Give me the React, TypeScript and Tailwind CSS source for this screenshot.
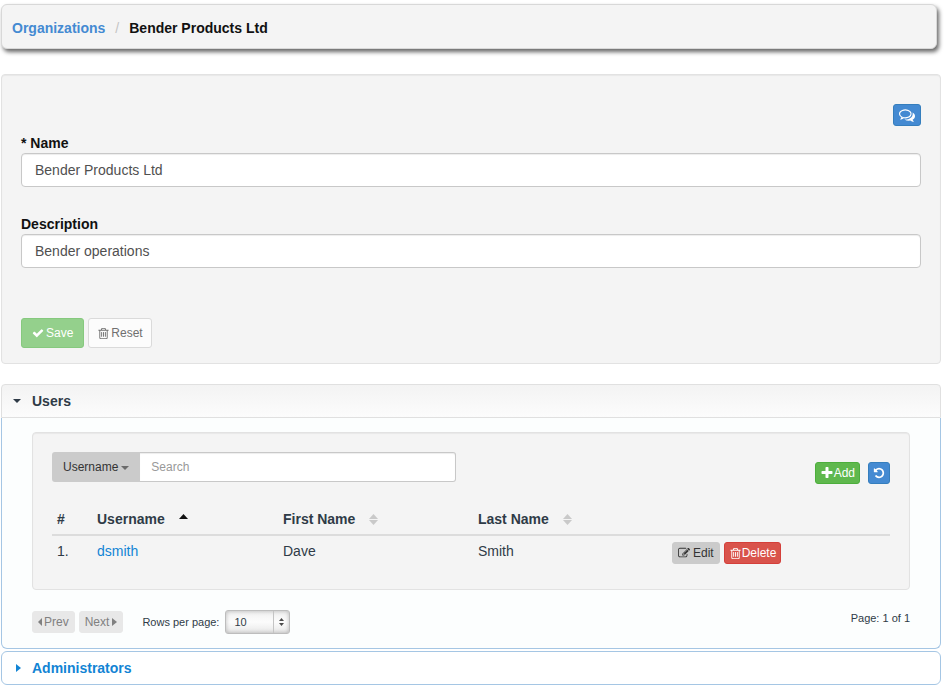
import { useState } from "react";
import type { ReactNode } from "react";

const ICONS = {
  check:
    "M1671 566q0 40-28 68l-724 724-136 136q-28 28-68 28t-68-28l-136-136-362-362q-28-28-28-68t28-68l136-136q28-28 68-28t68 28l294 295 656-657q28-28 68-28t68 28l136 136q28 28 28 68z",
  trash:
    "M704 736v576q0 14-9 23t-23 9h-64q-14 0-23-9t-9-23v-576q0-14 9-23t23-9h64q14 0 23 9t9 23zm256 0v576q0 14-9 23t-23 9h-64q-14 0-23-9t-9-23v-576q0-14 9-23t23-9h64q14 0 23 9t9 23zm256 0v576q0 14-9 23t-23 9h-64q-14 0-23-9t-9-23v-576q0-14 9-23t23-9h64q14 0 23 9t9 23zm128 724v-948h-896v948q0 22 7 40.500t14.500 27 10.500 8.500h832q3 0 10.500-8.500t14.500-27 7-40.500zm-672-1076h448l-48-117q-7-9-17-11h-317q-10 2-17 11zm928 32v64q0 14-9 23t-23 9h-96v948q0 83-47 143.500t-113 60.500h-832q-66 0-113-58.500t-47-141.500v-952h-96q-14 0-23-9t-9-23v-64q0-14 9-23t23-9h309l70-167q15-37 54-63t79-26h320q40 0 79 26t54 63l70 167h309q14 0 23 9t9 23z",
  plus: "M1600 736v192q0 40-28 68t-68 28h-416v416q0 40-28 68t-68 28h-192q-40 0-68-28t-28-68v-416h-416q-40 0-68-28t-28-68v-192q0-40 28-68t68-28h416v-416q0-40 28-68t68-28h192q40 0 68 28t28 68v416h416q40 0 68 28t28 68z",
  edit: "M888 1184l116-116-152-152-116 116v56h96v96h56zm440-720q-16-16-33 1l-350 350q-17 17-1 33t33-1l350-350q17-17 1-33zm80 594v190q0 119-84.500 203.500t-203.500 84.500h-832q-119 0-203.500-84.500t-84.500-203.500v-832q0-119 84.500-203.500t203.500-84.500h832q63 0 117 25 15 7 18 23 3 17-9 29l-49 49q-14 14-32 8-23-6-45-6h-832q-66 0-113 47t-47 113v832q0 66 47 113t113 47h832q66 0 113-47t47-113v-126q0-13 9-22l64-64q15-15 35-7t20 29zm-96-738l288 288-672 672h-288v-288zm444 132l-92 92-288-288 92-92q28-28 68-28t68 28l152 152q28 28 28 68t-28 68z",
  undo: "M1664 896q0 156-61 298t-164 245-245 164-298 61q-172 0-327-72.500t-264-204.500q-7-10-6.500-22.500t8.500-20.500l137-138q10-9 25-9 16 2 23 12 73 95 179 147t225 52q104 0 198.500-40.500t163.500-109.500 109.500-163.500 40.500-198.500-40.500-198.500-109.500-163.500-163.500-109.500-198.500-40.500q-98 0-188 35.500t-160 101.500l137 138q31 30 14 69-17 40-59 40h-448q-26 0-45-19t-19-45v-448q0-42 40-59 39-17 69 14l130 129q107-101 244.500-156.500t284.500-55.500q156 0 298 61t245 164 164 245 61 298z",
  comments:
    "M704 384q-153 0-286 52t-211.500 141-78.500 191q0 82 53 158t149 132l97 56-35 84q34-20 62-39l44-31 53 10q78 14 153 14 153 0 286-52t211.500-141 78.500-191-78.500-191-211.500-141-286-52zm0-128q191 0 353.500 68.500t256.500 186.500 94 257-94 257-256.500 186.500-353.500 68.500q-86 0-176-16-124 88-278 128-36 9-86 16h-3q-11 0-20.500-8t-11.500-21q-1-3-1-6.500t.5-6.500 2-6l2.500-5 3.500-5.500 4-5 4.500-5 4-4.500q5-6 23-25t26-29.500 22.500-29 25-38.500 20.500-44q-124-72-195-177t-71-224q0-139 94-257t256.500-186.500 353.500-68.500zm822 1169q10 24 20.500 44t25 38.500 22.500 29 26 29.500 23 25q1 1 4 4.500t4.500 5 4 5 3.500 5.500l2.500 5 2 6 .5 6.500-1 6.500q-3 14-13 22t-22 7q-50-7-86-16-154-40-278-128-90 16-176 16-271 0-472-132 58 4 88 4 161 0 309-45t264-129q125-92 192-212t67-254q0-77-23-152 129 71 204 178t75 230q0 120-71 224.500t-195 176.500z",
};

function Icon({ name, className = "size-3" }: { name: keyof typeof ICONS; className?: string }) {
  return (
    <svg viewBox="0 0 1792 1792" fill="currentColor" aria-hidden="true" className={`shrink-0 ${className}`}>
      <path d={ICONS[name]} />
    </svg>
  );
}

const TRIANGLES = {
  down: { box: "0 0 8 4", d: "M0 0h8L4 4z" },
  up: { box: "0 0 8 4", d: "M0 4h8L4 0z" },
  left: { box: "0 0 4 8", d: "M4 0v8L0 4z" },
  right: { box: "0 0 4 8", d: "M0 0v8L4 4z" },
};

function Triangle({ to, className }: { to: keyof typeof TRIANGLES; className: string }) {
  return (
    <svg
      viewBox={TRIANGLES[to].box}
      preserveAspectRatio="none"
      fill="currentColor"
      aria-hidden="true"
      className={`shrink-0 ${className}`}
    >
      <path d={TRIANGLES[to].d} />
    </svg>
  );
}

function SortBoth() {
  return (
    <span className="flex flex-col gap-px text-[#c9c9c9]">
      <Triangle to="up" className="h-[5px] w-[9px]" />
      <Triangle to="down" className="h-[5px] w-[9px]" />
    </span>
  );
}

function Field({ id, label, initial }: { id: string; label: string; initial: string }) {
  const [value, setValue] = useState(initial);
  return (
    <div>
      <label htmlFor={id} className="block font-bold text-[#111]">
        {label}
      </label>
      <input
        id={id}
        value={value}
        onChange={(e) => setValue(e.target.value)}
        className="block h-[34px] w-full rounded border border-[#c8c8c8] bg-white px-[13px] text-[#505050] shadow-[inset_0_1px_1px_rgba(0,0,0,0.075)]"
      />
    </div>
  );
}

function HeaderCell({ className, children, sort }: { className: string; children: ReactNode; sort?: ReactNode }) {
  return (
    <th scope="col" className={`border-b-2 border-[#dcdcdc] p-[5px] text-left font-bold ${className}`}>
      <span className="flex items-center gap-[14px]">
        {children}
        {sort}
      </span>
    </th>
  );
}

const PANEL = "rounded border border-[#e2e2e2] bg-[#f4f4f4] px-[19px] shadow-[inset_0_1px_1px_rgba(0,0,0,0.05)]";
const SMALL = "flex h-[22px] items-center rounded-[3px] border px-[5px] text-xs";

export default function App() {
  return (
    <div className="bg-white pt-1 pr-[5px] pb-1 pl-px font-['Liberation_Sans',Arial,sans-serif] text-sm leading-5 text-[#2f3b47]">
      <nav
        aria-label="Breadcrumb"
        className="mr-1 flex h-[45px] items-center rounded-md border border-[#d8d8d8] bg-[#f4f4f4] px-[10px] pt-[3px] font-bold shadow-[2px_3px_4px_rgba(0,0,0,0.6)]"
      >
        <a href="#organizations" className="text-[#448ad2]">
          Organizations
        </a>
        <span className="px-[10px] font-normal text-[#c4c4c4]">/</span>
        <span className="text-[#111]">Bender Products Ltd</span>
      </nav>

      <form className={`mt-[25px] pt-[29px] pb-[15px] ${PANEL}`} onSubmit={(e) => e.preventDefault()}>
        <div className="flex justify-end">
          <button type="button" aria-label="Comments" className={`${SMALL} border-[#357ebd] bg-[#448ad2] text-white`}>
            <Icon name="comments" className="size-4" />
          </button>
        </div>
        <div className="mt-[7px] flex flex-col gap-[27px]">
          <Field id="name" label="* Name" initial="Bender Products Ltd" />
          <Field id="description" label="Description" initial="Bender operations" />
        </div>
        <div className="mt-[50px] flex gap-1 text-xs">
          <button
            type="submit"
            className="flex h-[30px] items-center gap-[2px] rounded-[3px] border border-[#86c97e] bg-[#94d08c] px-[10px] text-white"
          >
            <Icon name="check" />
            Save
          </button>
          <button
            type="button"
            className="flex h-[30px] items-center gap-px rounded-[3px] border border-[#dadada] bg-[#fcfcfc] px-2 text-[#707070]"
          >
            <Icon name="trash" className="size-[13px]" />
            Reset
          </button>
        </div>
      </form>

      <section className="mt-5">
        <h2>
          <button
            type="button"
            aria-expanded="true"
            className="flex h-[34px] w-full items-center gap-[11px] rounded-t border border-[#e0e0e0] bg-linear-to-b from-[#f3f3f3] to-[#fcfcfc] px-[11px] font-bold"
          >
            <Triangle to="down" className="h-1 w-2" />
            Users
          </button>
        </h2>
        <div className="rounded-b-md border border-t-0 border-[#a5c6e4] bg-[#fcfefe] px-[30px] pt-[14px] pb-[14px]">
          <div className={`py-[19px] ${PANEL}`}>
            <div className="flex items-start justify-between">
              <div className="flex h-[30px] w-[404px] text-xs">
                <button
                  type="button"
                  aria-haspopup="menu"
                  className="flex items-center gap-[3px] rounded-l-[3px] bg-[#cbcbcb] px-[11px] text-[#333]"
                >
                  Username
                  <Triangle to="down" className="mt-[2px] h-1 w-2 text-[#6b6b6b]" />
                </button>
                <input
                  aria-label="Search"
                  placeholder="Search"
                  className="min-w-0 flex-1 rounded-r-[3px] border border-l-0 border-[#c8c8c8] bg-white px-[11px] placeholder:text-[#999] shadow-[inset_0_1px_1px_rgba(0,0,0,0.075)]"
                />
              </div>
              <div className="flex gap-2 pt-[10px]">
                <button type="button" className={`${SMALL} border-[#4cae3c] bg-[#5fb84d] px-1! text-white`}>
                  <Icon name="plus" className="size-[14px]" />
                  Add
                </button>
                <button
                  type="button"
                  aria-label="Refresh"
                  className={`${SMALL} w-[22px] justify-center border-[#357ebd] bg-[#448ad2] text-white`}
                >
                  <Icon name="undo" />
                </button>
              </div>
            </div>

            <table className="mt-5 w-full table-fixed border-collapse">
              <thead>
                <tr>
                  <HeaderCell className="w-10">#</HeaderCell>
                  <HeaderCell
                    className="w-[186px]"
                    sort={<Triangle to="up" className="mb-[5px] h-[5px] w-[9px] text-[#111]" />}
                  >
                    Username
                  </HeaderCell>
                  <HeaderCell className="w-[195px]" sort={<SortBoth />}>
                    First Name
                  </HeaderCell>
                  <HeaderCell className="w-[194px]" sort={<SortBoth />}>
                    Last Name
                  </HeaderCell>
                  <th scope="col" aria-label="Actions" className="border-b-2 border-[#dcdcdc]" />
                </tr>
              </thead>
              <tbody>
                <tr className="align-top">
                  <td className="p-[5px]">1.</td>
                  <td className="p-[5px]">
                    <a href="#dsmith" className="text-[#1284d4]">
                      dsmith
                    </a>
                  </td>
                  <td className="p-[5px]">Dave</td>
                  <td className="p-[5px]">Smith</td>
                  <td className="px-[5px] py-[6px]">
                    <div className="flex gap-1">
                      <button type="button" className={`${SMALL} gap-[3px] border-[#cbcbcb] bg-[#cbcbcb] text-[#333]`}>
                        <Icon name="edit" />
                        Edit
                      </button>
                      <button type="button" className={`${SMALL} border-[#d43f3a] bg-[#d9534b] px-1! text-white`}>
                        <Icon name="trash" className="size-[13px]" />
                        Delete
                      </button>
                    </div>
                  </td>
                </tr>
              </tbody>
            </table>
          </div>

          <div className="mt-5 flex items-start justify-between text-[11px]">
            <div className="flex items-center">
              <button type="button" className={`${SMALL} gap-[2px] border-[#e8e8e8] bg-[#e8e8e8] text-[#808080]`}>
                <Triangle to="left" className="h-2 w-1" />
                Prev
              </button>
              <button type="button" className={`${SMALL} ml-1 gap-[3px] border-[#e8e8e8] bg-[#e8e8e8] text-[#808080]`}>
                Next
                <Triangle to="right" className="h-2 w-[5px]" />
              </button>
              <label htmlFor="rows" className="ml-[19px]">
                Rows per page:
              </label>
              <div className="relative ml-[6px]">
                <select
                  id="rows"
                  defaultValue="10"
                  className="block h-6 w-[65px] appearance-none rounded-[3px] border border-[#bdbdbd] bg-linear-to-b from-[#f0f0f0] via-[#fcfcfc] to-[#e8e8e8] pl-2 shadow-[inset_0_0_4px_rgba(0,0,0,0.25)]"
                >
                  <option>10</option>
                  <option>25</option>
                  <option>50</option>
                </select>
                <span className="pointer-events-none absolute inset-y-px right-px flex w-4 flex-col items-center justify-center gap-[2px] border-l border-[#c4c4c4] text-[#4a4a4a]">
                  <Triangle to="up" className="h-[3px] w-[5px]" />
                  <Triangle to="down" className="h-[3px] w-[5px]" />
                </span>
              </div>
            </div>
            <p className="-mt-[2px]">Page: 1 of 1</p>
          </div>
        </div>
      </section>

      <h2 className="mt-[2px]">
        <button
          type="button"
          aria-expanded="false"
          className="flex h-[34px] w-full items-center gap-[11px] rounded-md border border-[#a5c6e4] bg-white px-[14px] font-bold text-[#1284d4]"
        >
          <Triangle to="right" className="h-2 w-[5px]" />
          Administrators
        </button>
      </h2>
    </div>
  );
}
